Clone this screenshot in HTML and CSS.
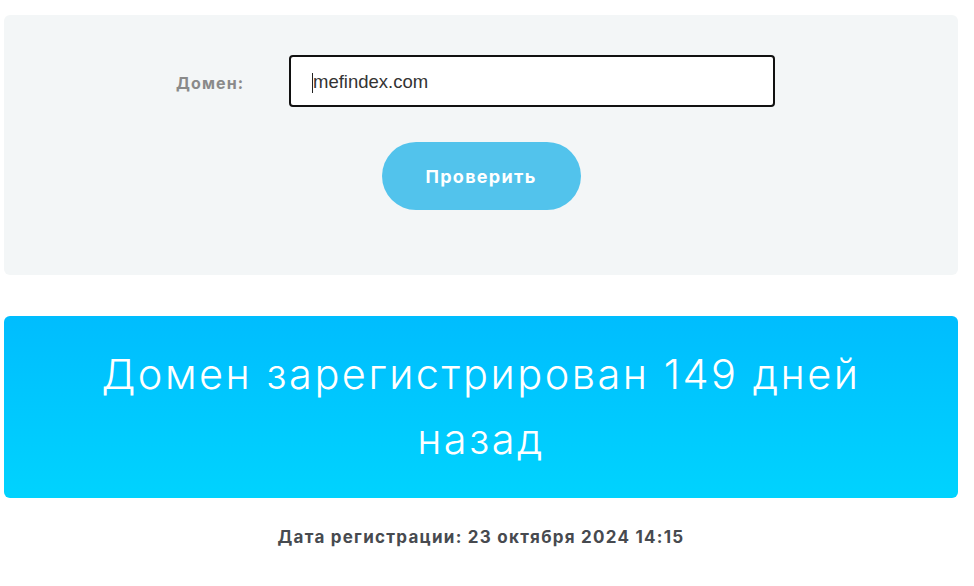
FILE: index.html
```html
<!DOCTYPE html>
<html lang="ru">
<head>
<meta charset="utf-8">
<title>Проверка возраста домена</title>
<link rel="stylesheet" href="styles.css">
</head>
<body>
<div class="page">
  <section class="form-card">
    <div class="form-row">
      <label class="label" for="domain">Домен:</label>
      <div class="input"><span class="caret"></span><span class="input-text">mefindex.com</span></div>
    </div>
    <button class="check-btn" type="button">Проверить</button>
  </section>
  <section class="result-card">
    <h1 class="result-text">Домен зарегистрирован 149 дней назад</h1>
  </section>
  <p class="reg-date">Дата регистрации: 23 октября 2024 14:15</p>
</div>
</body>
</html>
```

FILE: styles.css
```css
* { box-sizing: border-box; }
html, body { margin: 0; padding: 0; background: #ffffff; }
body { font-family: Inter, "Noto Sans", sans-serif; }
.page {
  width: 954px;
  margin-left: 4px;
  padding-top: 15px;
  display: flex;
  flex-direction: column;
}
.form-card {
  height: 260px;
  background: #f3f6f7;
  border-radius: 6px;
  display: flex;
  flex-direction: column;
  align-items: center;
  padding-top: 40px;
}
.form-row {
  align-self: flex-start;
  display: flex;
  align-items: center;
  margin-left: 172px;
}
.label {
  width: 113px;
  font-size: 16px;
  font-weight: 700;
  letter-spacing: 1.1px;
  color: #8a8a8a;
  margin-top: 4px;
}
.input {
  width: 486px;
  height: 52px;
  background: #ffffff;
  border: 2px solid #111111;
  border-radius: 4px;
  display: flex;
  align-items: center;
  padding-left: 21px;
  padding-top: 2px;
}
.caret {
  width: 1px;
  height: 20px;
  background: #222;
  margin-top: 2px;
}
.input-text {
  font-family: "Liberation Sans", Arial, sans-serif;
  font-size: 18.5px;
  color: #333333;
}
.check-btn {
  margin-top: 35px;
  width: 199px;
  height: 68px;
  border: none;
  border-radius: 34px;
  background: #52c3ec;
  color: #ffffff;
  font-family: Inter, "Noto Sans", sans-serif;
  font-size: 18px;
  font-weight: 700;
  letter-spacing: 1.3px;
  cursor: pointer;
}
.result-card {
  margin-top: 41px;
  height: 182px;
  border-radius: 6px;
  background: linear-gradient(180deg, #00bdfe 0%, #00d3fe 100%);
  display: flex;
  align-items: center;
  justify-content: center;
}
.result-text {
  margin: 0;
  max-width: 860px;
  text-align: center;
  color: #ffffff;
  font-family: Inter, "Noto Sans", sans-serif;
  font-weight: 300;
  font-size: 41.5px;
  letter-spacing: 2.5px;
  line-height: 65px;
}
.reg-date {
  margin: 29px 0 0;
  text-align: center;
  font-size: 17px;
  font-weight: 700;
  letter-spacing: 1.25px;
  color: #474a4f;
}
```
